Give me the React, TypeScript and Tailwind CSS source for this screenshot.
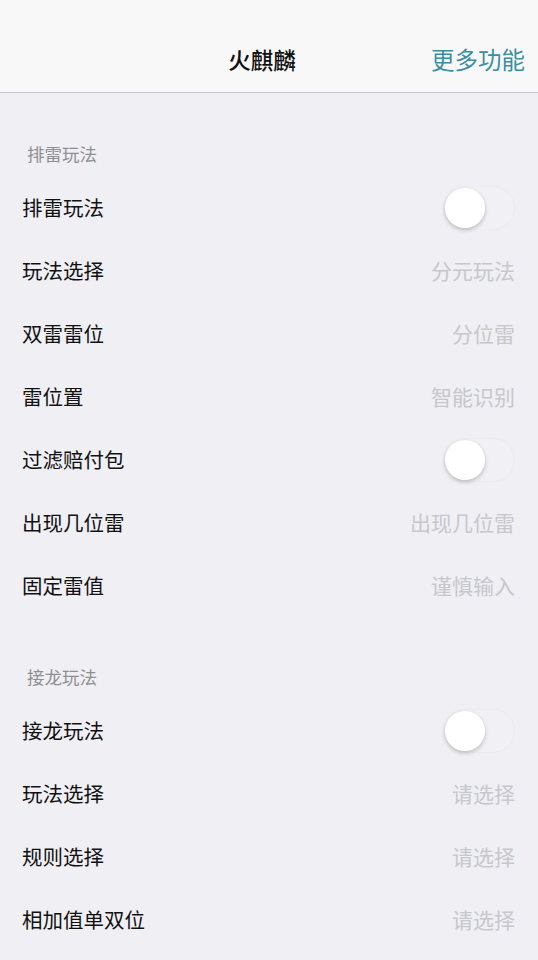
import React from 'react';

type Row = { label: string; value?: string; toggle?: boolean };

const sections: { title: string; rows: Row[] }[] = [
  {
    title: '排雷玩法',
    rows: [
      { label: '排雷玩法', toggle: true },
      { label: '玩法选择', value: '分元玩法' },
      { label: '双雷雷位', value: '分位雷' },
      { label: '雷位置', value: '智能识别' },
      { label: '过滤赔付包', toggle: true },
      { label: '出现几位雷', value: '出现几位雷' },
      { label: '固定雷值', value: '谨慎输入' },
    ],
  },
  {
    title: '接龙玩法',
    rows: [
      { label: '接龙玩法', toggle: true },
      { label: '玩法选择', value: '请选择' },
      { label: '规则选择', value: '请选择' },
      { label: '相加值单双位', value: '请选择' },
    ],
  },
];

function Switch() {
  return (
    <div className="w-[72px] h-[44px] rounded-full border border-[#ececf0] bg-[#f1f1f5] flex items-center pl-[1px]">
      <div className="w-[40px] h-[40px] rounded-full bg-white shadow-[0_2px_4px_rgba(0,0,0,0.22)]" />
    </div>
  );
}

export default function App() {
  return (
    <div
      className="w-[538px] h-[960px] overflow-hidden bg-[#efeff4]"
      style={{ fontFamily: '"Noto Sans CJK SC", "Noto Sans", sans-serif' }}
    >
      <header className="h-[93px] bg-[#f8f8f9] border-b border-[#c4c4c8] flex items-end pb-[18px] relative">
        <div className="flex-1 text-center text-[22.5px] font-medium text-[#111] leading-[30px] pr-[14px]">
          火麒麟
        </div>
        <div className="absolute right-[13px] bottom-[18px] text-[23.5px] text-[#3d8e9e] leading-[30px]">
          更多功能
        </div>
      </header>

      {sections.map((s, i) => (
        <section key={i}>
          <div className={`${i === 0 ? 'h-[83px]' : 'h-[82px]'} flex items-end pb-[10px] pl-[27px] text-[17.5px] leading-[24px] text-[#8e8e93]`}>
            {s.title}
          </div>
          {s.rows.map((r, j) => (
            <div key={j} className="h-[63px] flex items-center justify-between pl-[22px] pr-[23px]">
              <span className="text-[20.5px] text-[#111]">{r.label}</span>
              {r.toggle ? (
                <Switch />
              ) : (
                <span className="text-[21px] text-[#c7c7cc]">{r.value}</span>
              )}
            </div>
          ))}
        </section>
      ))}
    </div>
  );
}
